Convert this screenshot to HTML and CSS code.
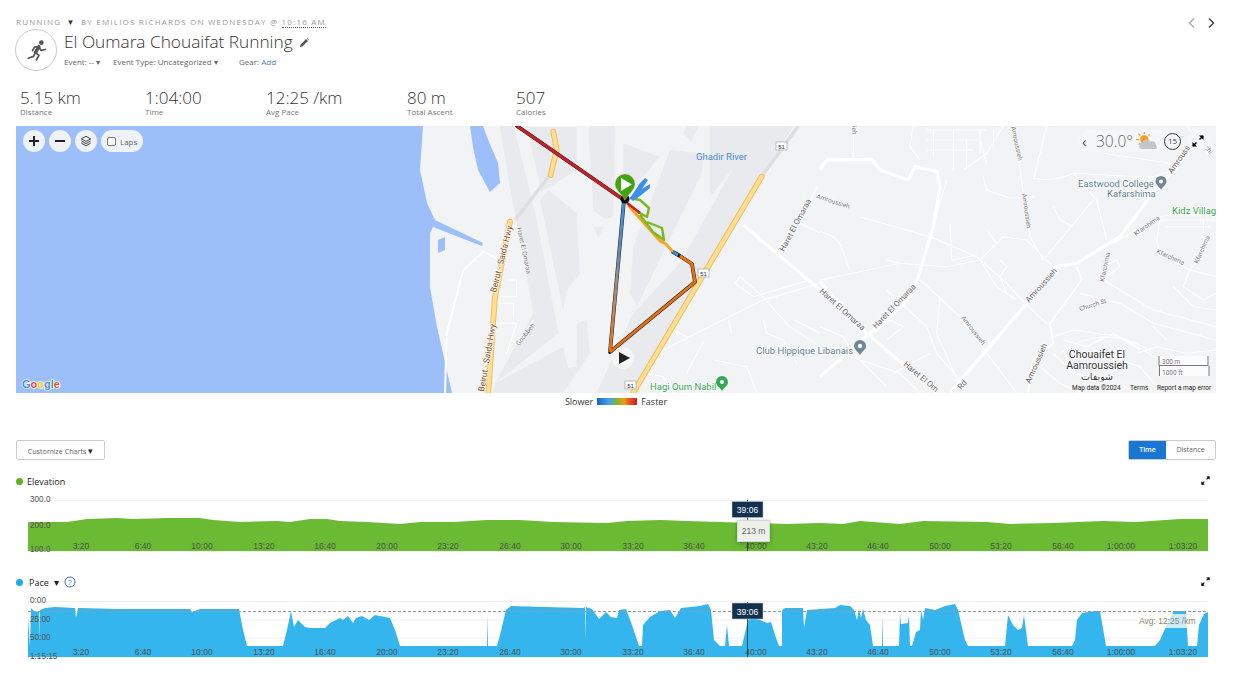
FILE: index.html
```html
<!DOCTYPE html>
<html lang="en">
<head>
<meta charset="utf-8">
<title>El Oumara Chouaifat Running</title>
<link rel="stylesheet" href="styles.css">
</head>
<body>
<div class="page">
  <nav class="pager">
    <svg class="pager-icon" viewBox="0 0 10 12"><path class="chev-off" d="M7 1.500 2.500 6 7 10.500"/></svg>
    <svg class="pager-icon" viewBox="0 0 10 12"><path class="chev-on" d="M3 1.500 7.500 6 3 10.500"/></svg>
  </nav>
  <div class="kicker">RUNNING <span class="kicker-caret">▼</span> BY EMILIOS RICHARDS ON WEDNESDAY @ <span class="kicker-time">10:16 AM</span></div>
  <header class="head">
    <div class="avatar">
      <svg viewBox="0 0 40 40" class="runner">
        <circle cx="26" cy="13" r="2.400"/>
        <path class="runner-body" d="M23.500 17 20 23"/>
        <path class="runner-limb" d="M20 23 23.500 26 21 30.500M20 23 18 27 12.500 29M23.500 17 19 17.500 17 21M23.500 17 25.500 21 30 20"/>
      </svg>
    </div>
    <div class="head-text">
      <h1 class="title">El Oumara Chouaifat Running
        <svg class="pencil" viewBox="0 0 12 12"><path d="M1 11l.8-3L8.500 1.300l2.200 2.200L4 10.200zM9.200.7l.7-.5 1.900 1.900-.5.700z"/></svg>
      </h1>
      <div class="meta">
        <span class="meta-a">Event: -- ▾</span>
        <span class="meta-b">Event Type: Uncategorized ▾</span>
        <span class="meta-c">Gear: <span class="link">Add</span></span>
      </div>
    </div>
  </header>
  <section class="stats">
    <div class="stat s1"><div class="val">5.15 km</div><div class="lab">Distance</div></div>
    <div class="stat s2"><div class="val">1:04:00</div><div class="lab">Time</div></div>
    <div class="stat s3"><div class="val">12:25 /km</div><div class="lab">Avg Pace</div></div>
    <div class="stat s4"><div class="val">80 m</div><div class="lab">Total Ascent</div></div>
    <div class="stat s5"><div class="val">507</div><div class="lab">Calories</div></div>
  </section>

  <section class="map">
    <svg class="map-canvas" viewBox="16 126 1200 267" preserveAspectRatio="none">
      <defs>
        <linearGradient id="desc" gradientUnits="userSpaceOnUse" x1="624" y1="200" x2="610" y2="352">
          <stop offset="0" stop-color="#3d8fe0"/><stop offset=".3" stop-color="#5f87b8"/><stop offset=".55" stop-color="#9b8f88"/><stop offset="1" stop-color="#e8731a"/>
        </linearGradient>
      </defs>
      <rect class="land" x="16" y="126" width="1200" height="267"/>
      <path class="water" d="M16 126H423L420 170 427 203 435 220 483 243 482 246 433 227 430 233 430 287 437 327 452 393H16Z"/>
      <path class="water" d="M470 126 473 147 478 170 490 192 500 183 498 163 487 137 483 126Z"/>
      <path class="water" d="M438 240 445 237 445 250 438 253Z"/>
      <g transform="translate(420 120) scale(.33333)">
        <path class="block" d="M240 18H282L350 300 415 640 225 790 340 580 270 200Z"/>
        <path class="block" d="M320 20H470V150L365 215Z"/>
        <path class="block" d="M505 30Q505 18 520 18H585L580 285Q570 300 550 295L520 270Z"/>
        <path class="block" d="M360 240 385 210 470 280 480 460 440 510 430 570Z"/>
        <path class="block" d="M610 70 720 110 610 240Z"/>
        <path class="block" d="M750 90 850 100 845 160 650 560 630 520 640 380Z"/>
        <path class="block" d="M870 18H1040L870 230Z"/>
        <path class="block" d="M1010 18 780 430 640 580 530 818H640L1120 18Z"/>
        <path class="block" d="M470 610 500 600 510 700 430 818H220L225 790 430 680 445 745 470 740Z"/>
        <path class="block" d="M520 320H550L535 355Z"/>
        <path class="block" d="M800 18H835L815 65 790 40Z"/>
        <path class="road-gray" d="M285 300 390 165M1135 18 1025 170"/>
        <path class="road-mid" d="M75 818 80 640 130 450 190 395 240 420"/>
        <path class="road-thin" d="M265 480H290V530H240M240 550H280V590M240 610H290L260 700M340 600 290 675"/>
        <path class="road-thin" d="M730 690 1030 540 1200 490M1040 540 960 470 945 490 1000 530 1170 480M1040 545 1110 620 1200 680M800 650 760 630M850 665 800 760M925 600 935 640M1030 600 1040 640 1090 660 1130 730M670 760 730 770 760 818M880 720 980 740 1010 818M1125 600 1200 640M1190 200 1140 310 1200 340"/>
        <path class="road-main" d="M970 315 1200 510"/>
        <path class="hw-o" d="M1025 170 640 818M270 305 225 530 205 818M400 35 410 90 392 165"/>
        <path class="hw-i" d="M1025 170 640 818M270 305 225 530 205 818M400 35 410 90 392 165"/>
      </g>
      <g transform="translate(820 120) scale(.33333)">
        <path class="road-thin" d="M100 18V115M280 18 270 80 300 120M500 30H320M320 60H470M320 90H460M340 30V110M400 30V150M440 60V140M480 30V100M520 30V70M550 18 500 100 430 150M580 18 600 150 630 350 670 420M680 18 640 180M640 175C700 185 740 170 760 160 800 160 900 170 1000 170L1060 150M760 160 830 240 860 360M490 170 500 210 570 235 640 230M670 420 820 240M0 335C80 350 70 420 90 450M0 480 240 430 380 440 480 420 550 350 620 360 700 440M120 290 330 350 470 410 560 490 610 545 680 610M330 350 380 180M390 310 395 420 470 405M300 480 420 590 500 700 590 818M360 530 350 640 420 800M480 420 530 500 590 540M540 420 560 440 540 470 560 520M200 420 240 430M780 520 900 550 1000 610 1188 660M850 480 1000 570 1188 620M700 650 760 630 900 650 1020 720M720 700C800 640 900 630 1000 700M1188 300H1020L1010 360 1020 400 1110 450 1188 470M880 370 1000 300 1040 285H1188M1110 450 1090 500 1150 540 1188 520M1150 300V400L1110 450M1040 320H1170M700 260 720 300 760 320M500 330 530 370 500 400M850 440 890 420 900 440 860 470M1100 18 1180 120M850 100 1050 130 1040 180M880 50H1000M200 510 320 620 350 700 420 780M0 620 70 650 100 700 200 800M160 640 210 600 250 620 200 660M60 700 240 760 300 818M700 700 760 760 880 790M820 690 960 740 1010 800M220 760 330 700M480 60 500 130M730 660 800 680 880 640 960 690M660 740 720 790 780 818M950 700 1010 680 1100 700 1188 690M1060 500 1120 560 1188 570M1000 620 1040 660"/>
        <path class="road-main" d="M0 150 20 120 155 118 180 150 265 180 285 140 350 155 360 200 340 320 295 470 265 540 150 640 0 770"/>
        <path class="road-main" d="M0 485 140 640 350 818"/>
        <path class="road-main" d="M390 818 620 550 710 440 770 430 900 350 990 230 1110 90"/>
        <path class="road-mid" d="M770 440 785 480 690 610 700 670 640 720 625 818"/>
      </g>
      <g class="shields">
        <rect x="776" y="142" width="11" height="8"/><text x="781.500" y="148.500">51</text>
        <rect x="698" y="269" width="11" height="8"/><text x="703.500" y="275.500">51</text>
        <rect x="625" y="381" width="11" height="8"/><text x="630.500" y="387.500">51</text>
      </g>
      <text class="t-water" x="696" y="160">Ghadir River</text>
      <g class="t-hw">
        <text transform="translate(496 293) rotate(-76)">Beirut - Saida Hwy</text>
        <text transform="translate(484 392) rotate(-80)">Beirut - Saida Hwy</text>
      </g>
      <g class="t-road">
        <text transform="translate(784 252) rotate(-62)">Haret El Omaraa</text>
        <text transform="translate(819 292) rotate(42)">Haret El Omaraa</text>
        <text transform="translate(876 329) rotate(-46)">Haret El Omaraa</text>
        <text transform="translate(903 365) rotate(40)">Haret El Om</text>
        <text transform="translate(961 390) rotate(-48)">Rd</text>
        <text transform="translate(1029 303) rotate(-48)">Amroussieh</text>
        <text transform="translate(1030 384) rotate(-66)">Amroussieh</text>
        <text transform="translate(1172 174) rotate(-55)">Amrouss</text>
      </g>
      <g class="t-small">
        <text transform="translate(517 228) rotate(78)">Haret El Omaraa</text>
        <text transform="translate(519 346) rotate(-52)">Goobbeh</text>
        <text transform="translate(961 318) rotate(52)">Amroussieh</text>
        <text transform="translate(816 198) rotate(18)">Amroussieh</text>
        <text transform="translate(1022 194) rotate(82)">Amroussieh</text>
        <text transform="translate(1011 127) rotate(78)">Amroussieh</text>
        <text transform="translate(852 126) rotate(88)">ieh</text>
        <text transform="translate(1203 146) rotate(52)">rchi</text>
        <text transform="translate(1136 236) rotate(-35)">Kfarchima</text>
        <text transform="translate(1156 253) rotate(24)">Kfarchima</text>
        <text transform="translate(1198 264) rotate(-66)">Kfarchima</text>
        <text transform="translate(1104 282) rotate(-78)">Kfarchima</text>
        <text transform="translate(1080 311) rotate(-17)">Church St</text>
      </g>
      <g class="t-poi">
        <text x="1078" y="187">Eastwood College</text>
        <text x="1107" y="197">Kafarshima</text>
        <text x="756" y="354">Club Hippique Libanais</text>
      </g>
      <g class="t-green">
        <text x="1172" y="214">Kidz Villag</text>
        <text x="650" y="390">Hagi Oum Nabil</text>
      </g>
      <g class="t-town">
        <text x="1097" y="358">Chouaifet El</text>
        <text x="1097" y="369">Aamroussieh</text>
        <text class="t-ar" x="1097" y="380">شويفات</text>
      </g>
      <path class="pin-poi" d="M1161 176a5.500 5.500 0 0 1 5.500 5.500c0 3-3.500 5-5.500 8-2-3-5.500-5-5.500-8a5.500 5.500 0 0 1 5.500-5.500Z"/>
      <circle class="pin-hole" cx="1161" cy="181.500" r="2"/>
      <path class="pin-poi" d="M860 340a6 6 0 0 1 6 6c0 3.500-4 5.500-6 9-2-3.500-6-5.500-6-9a6 6 0 0 1 6-6Z"/>
      <circle class="pin-hole" cx="860" cy="346" r="2.200"/>
      <path class="pin-green" d="M722 376a6 6 0 0 1 6 6c0 3.500-4 5.500-6 9-2-3.500-6-5.500-6-9a6 6 0 0 1 6-6Z"/>
      <circle class="pin-hole" cx="722" cy="382" r="2"/>

      <path class="trk-o" d="M517 126 624 200"/>
      <path class="trk-red" d="M517 126 624 200"/>
      <path class="trk-o" d="M624 200 610 352 695 282 692 264 680 256 673 252"/>
      <path class="trk-grad" d="M624 200 610 352"/>
      <path class="trk-orange" d="M610 352 695 282 692 264 680 256"/>
      <path class="trk-amber" d="M628 205 660 241 666 244 673 252"/>
      <path class="trk-blue" d="M673 252 678 255"/>
      <path class="trk-green" d="M630 198 640 200 649 208 647 217 638 212M647 222 662 228 664 240 653 232 640 215"/>
      <path class="trk-red" d="M627 203 640 213"/>
      <path class="wing" d="M630 198 640 183 645 178 648 180 642 189 650 184 650 188 640 196 633 201Z"/>
      <circle class="end-dot" cx="625" cy="199" r="4.500"/>
      <path class="pin-start" d="M625 174a10 10 0 0 1 10 10c0 6-6 9-10 16-4-7-10-10-10-16a10 10 0 0 1 10-10Z"/>
      <path class="pin-play" d="M621 178 632 184.500 621 191Z"/>
      <circle class="play-bg" cx="623" cy="358" r="11"/>
      <path class="play-tri" d="M619 352 630 358 619 364Z"/>
      <g class="g-logo">
        <text x="22" y="388"><tspan class="g1">G</tspan><tspan class="g2">o</tspan><tspan class="g3">o</tspan><tspan class="g1">g</tspan><tspan class="g4">l</tspan><tspan class="g2">e</tspan></text>
      </g>
      <rect class="attr-bg" x="1070" y="381" width="146" height="12"/>
      <g class="t-attr">
        <text x="1072" y="390">Map data ©2024</text>
        <text x="1130" y="390">Terms</text>
        <text x="1157" y="390">Report a map error</text>
      </g>
      <g class="scale">
        <rect class="scale-bg" x="1159" y="356" width="50" height="20"/>
        <path class="scale-line" d="M1159 356V365.500H1208V356M1159.500 376V365.500M1209 376V365.500"/>
        <text x="1162" y="364">300 m</text>
        <text x="1162" y="375">1000 ft</text>
      </g>
    </svg>
    <div class="map-tools">
      <button class="tool"><svg viewBox="0 0 12 12"><path class="ico-bold" d="M6 1V11M1 6H11"/></svg></button>
      <button class="tool"><svg viewBox="0 0 12 12"><path class="ico-bold" d="M1 6H11"/></svg></button>
      <button class="tool"><svg viewBox="0 0 14 14"><path class="ico-thin" d="M7 1.500 12.500 4.500 7 7.500 1.500 4.500ZM1.500 7 7 10 12.500 7M1.500 9.500 7 12.500 12.500 9.500"/></svg></button>
      <label class="laps"><span class="check"></span>Laps</label>
    </div>
    <div class="weather">
      <span class="w-back">‹</span>
      <span class="w-temp">30.0°</span>
      <svg class="w-icon" viewBox="0 0 24 20">
        <circle class="sun" cx="9" cy="8" r="4.500"/>
        <path class="sun-rays" d="M9 0V2.500M2.500 2 4.500 4M0 8.500H3M2.500 14 4.500 12M15 2.500 13.500 4"/>
        <path class="cloud" d="M7 19a3.500 3.500 0 0 1 0-7 5 5 0 0 1 9-1.500 4.500 4.500 0 0 1 6 4.500 2.500 2.500 0 0 1 0 4Z"/>
      </svg>
      <span class="w-clock">15</span>
    </div>
    <button class="map-expand"><svg viewBox="0 0 12 12"><path class="exp" d="M1 11 4.500 7.500M11 1 7.500 4.500"/><path d="M.5 7V11.500H5ZM11.500 5V.5H7Z"/></svg></button>
  </section>

  <div class="legend">Slower <span class="legend-bar"></span> Faster</div>

  <div class="chart-bar">
    <button class="custom">Customize Charts <span class="custom-caret">▾</span></button>
    <div class="toggle"><span class="toggle-on">Time</span><span class="toggle-off">Distance</span></div>
  </div>

  <section class="chart chart-elev">
    <div class="chart-head">
      <span class="dot dot-green"></span><span class="chart-name">Elevation</span>
      <svg class="chart-exp" viewBox="0 0 12 12"><path class="exp" d="M1 11 4.500 7.500M11 1 7.500 4.500"/><path d="M.5 7V11.500H5ZM11.500 5V.5H7Z"/></svg>
    </div>
    <svg class="plot plot-elev" viewBox="16 495 1200 60">
      <path class="grid" d="M28 500.500H1208M28 551.500H1208"/>
      <path class="area-green" d="M28 522 67 522 87 519 117 518 133 519 167 518 200 518 213 520 240 522 277 521 290 522 310 519 327 519 340 521 367 522 400 524 420 522 453 522 487 520 520 520 553 522 607 523 627 521 660 520 687 521 720 522 753 523 787 524 820 523 843 524 860 521 900 524 923 521 987 522 1010 524 1053 523 1103 521 1137 522 1180 519 1208 519V551H28Z"/>
      <g class="ylab"><text x="30" y="502">300.0</text><text x="30" y="528">200.0</text><text x="30" y="552">100.0</text></g>
      <g class="xlab" transform="translate(0 549)">
        <text x="81" y="0">3:20</text><text x="143" y="0">6:40</text><text x="202" y="0">10:00</text><text x="264" y="0">13:20</text><text x="325" y="0">16:40</text><text x="387" y="0">20:00</text><text x="448" y="0">23:20</text><text x="510" y="0">26:40</text><text x="571" y="0">30:00</text><text x="633" y="0">33:20</text><text x="694" y="0">36:40</text><text x="756" y="0">40:00</text><text x="817" y="0">43:20</text><text x="878" y="0">46:40</text><text x="940" y="0">50:00</text><text x="1001" y="0">53:20</text><text x="1063" y="0">56:40</text><text x="1121" y="0">1:00:00</text><text x="1183" y="0">1:03:20</text>
      </g>
      <path class="cursor" d="M747.500 500V551"/>
      <rect class="badge" x="732" y="501.500" width="31" height="16"/>
      <text class="badge-t" x="747.500" y="513">39:06</text>
      <rect class="tip" x="737.500" y="520.500" width="32" height="21"/>
      <text class="tip-t" x="753.500" y="534">213 m</text>
    </svg>
  </section>

  <section class="chart chart-pace">
    <div class="chart-head">
      <span class="dot dot-blue"></span><span class="chart-name pace-name">Pace <span class="pace-caret">▾</span></span>
      <svg class="help" viewBox="0 0 12 12"><circle cx="6" cy="6" r="5"/><text x="6" y="8.700">?</text></svg>
      <svg class="chart-exp" viewBox="0 0 12 12"><path class="exp" d="M1 11 4.500 7.500M11 1 7.500 4.500"/><path d="M.5 7V11.500H5ZM11.500 5V.5H7Z"/></svg>
    </div>
    <svg class="plot plot-pace" viewBox="16 596 1200 64">
      <path class="grid" d="M28 601.500H1208M28 620H1208M28 638H1208M28 657.500H1208"/>
      <path class="area-blue" d="M28 657 28 618 30 646 31 608 34 611 39 612 39 640 40 610 45 608 55 607 75 608 76 618 78 608 120 609 190 609 192 612 200 609 239 609 243 630 247 646 283 646 287 630 291 611 294 627 298 620 305 627 310 628 325 628 330 623 340 618 343 620 348 616 353 623 356 618 362 616 369 620 375 615 390 618 395 630 400 646 487 646 487.500 615 488 646 497 646 500 635 506 610 511 606 545 607 583 608 585 607 585.500 640 586 607 592 609 599 619 606 612 611 617 617 618 619 610 626 609 632 625 639 646 642 646 643 625 650 617 660 611 670 610 675 618 681 608 700 606 708 604 711 610 714 640 720 646 725 646 727 625 729 646 742 646 748 620 752 618 760 620 767 623 771 622 775 635 779 646 782 646 782 610 785 608 803 608 804 628 807 610 835 608 840 605 850 606 854 610 857 620 859 609 861 618 863 609 866 620 870 625 873 646 882 646 882.500 614 883 646 899 646 900 614 901 624 908 623 909 615 910 646 912 646 916 632 920 630 921 610 923 620 925 608 935 610 945 606 955 604 958 610 965 640 968 646 1005 646 1008 615 1013 625 1018 630 1022 628 1024 615 1028 646 1072 646 1075 640 1077 620 1082 613 1095 611 1100 611 1106 646 1155 646 1160 640 1168 622 1174 611 1186 611 1188 646 1197 646 1199 625 1204 614 1208 612V657Z"/>
      <path class="avg" d="M28 611.500H1208"/>
      <rect class="avg-bg" x="1137" y="614" width="60" height="14"/>
      <text class="avg-t" x="1139" y="624">Avg: 12:25 /km</text>
      <g class="ylab"><text x="30" y="603">0:00</text><text x="30" y="622">25:00</text><text x="30" y="640">50:00</text><text x="30" y="659">1:15:15</text></g>
      <g class="xlab" transform="translate(0 655)">
        <text x="81" y="0">3:20</text><text x="143" y="0">6:40</text><text x="202" y="0">10:00</text><text x="264" y="0">13:20</text><text x="325" y="0">16:40</text><text x="387" y="0">20:00</text><text x="448" y="0">23:20</text><text x="510" y="0">26:40</text><text x="571" y="0">30:00</text><text x="633" y="0">33:20</text><text x="694" y="0">36:40</text><text x="756" y="0">40:00</text><text x="817" y="0">43:20</text><text x="878" y="0">46:40</text><text x="940" y="0">50:00</text><text x="1001" y="0">53:20</text><text x="1063" y="0">56:40</text><text x="1121" y="0">1:00:00</text><text x="1183" y="0">1:03:20</text>
      </g>
      <path class="cursor" d="M747.500 602V657"/>
      <rect class="badge" x="732" y="603" width="31" height="16"/>
      <text class="badge-t" x="747.500" y="614.500">39:06</text>
    </svg>
  </section>
</div>
</body>
</html>
```
FILE: styles.css
```css
* { box-sizing: border-box; }
html, body { margin: 0; padding: 0; background: #fff; }
body { font-family: "Open Sans", sans-serif; color: #333; overflow: hidden; }
.page { position: relative; width: 1236px; height: 675px; padding: 15px 20px 0 16px; }

.pager { position: absolute; top: 17px; right: 20px; display: flex; gap: 9px; }
.pager-icon { width: 10px; height: 12px; }
.pager-icon path { fill: none; stroke-width: 1.500; }
.chev-off { stroke: #aab; }
.chev-on { stroke: #445; }

.kicker { font-size: 8px; line-height: 14px; letter-spacing: 1.200px; color: #9a9aa3; white-space: nowrap; }
.kicker-caret { color: #333; font-size: 8px; padding: 0 2px; }
.kicker-time { border-bottom: 1px dotted #555; }

.head { display: flex; gap: 7px; margin-left: -1px; height: 44px; }
.avatar { width: 42px; height: 42px; border: 1.500px solid #ccc; border-radius: 50%; flex: none; }
.runner { width: 39px; height: 39px; display: block; }
.runner circle { fill: #555; }
.runner-body { fill: none; stroke: #555; stroke-width: 3.400; stroke-linecap: round; }
.runner-limb { fill: none; stroke: #555; stroke-width: 1.800; stroke-linecap: round; stroke-linejoin: round; }
.title { margin: 0; font-size: 17.250px; font-weight: 300; line-height: 26px; color: #333; white-space: nowrap; }
.pencil { width: 10px; height: 10px; margin-left: 2px; fill: #555; }
.meta { display: flex; font-size: 8px; line-height: 12px; color: #666; margin-top: 1px; white-space: nowrap; }
.meta-a { width: 49px; }
.meta-b { width: 126px; }
.link { color: #4a7fc0; }

.stats { display: flex; margin-top: 15px; padding-left: 4px; height: 38px; }
.stat { flex: none; }
.s1 { width: 125px; }
.s2 { width: 121px; }
.s3 { width: 141px; }
.s4 { width: 109px; }
.val { font-size: 17px; font-weight: 300; line-height: 19px; color: #333; white-space: nowrap; }
.lab { font-size: 8px; line-height: 9px; color: #777; white-space: nowrap; }

.map { position: relative; width: 1200px; height: 267px; }
.map-canvas { display: block; width: 1200px; height: 267px; font-family: Roboto, sans-serif; }
.land { fill: #f2f3f5; }
.water { fill: #9cbff9; }
.block { fill: #e8eaed; }
.road-gray { fill: none; stroke: #dcdee0; stroke-width: 10; }
.road-thin { fill: none; stroke: #fff; stroke-width: 3.200; stroke-linejoin: round; }
.road-mid { fill: none; stroke: #fff; stroke-width: 6; stroke-linejoin: round; }
.road-main { fill: none; stroke: #fff; stroke-width: 10; stroke-linejoin: round; }
.hw-o { fill: none; stroke: #f3b64a; stroke-width: 17; stroke-linecap: round; }
.hw-i { fill: none; stroke: #fdde94; stroke-width: 12; stroke-linecap: round; }
.shields rect { fill: #fff; stroke: #999; stroke-width: .6; }
.shields text { font-size: 6px; text-anchor: middle; fill: #333; font-family: "Liberation Sans", sans-serif; }
.t-water { font-size: 9.500px; fill: #4c8bd8; }
.t-hw { font-size: 8.500px; fill: #7a4a1c; stroke: #fff; stroke-width: 1.500px; paint-order: stroke; }
.t-road { font-size: 8px; fill: #666; stroke: #fff; stroke-width: 1.500px; paint-order: stroke; }
.t-small { font-size: 6.500px; fill: #777; stroke: #fff; stroke-width: 1px; paint-order: stroke; }
.t-poi { font-size: 9.500px; fill: #5f7f91; stroke: #fff; stroke-width: 1.500px; paint-order: stroke; }
.t-green { font-size: 9.500px; fill: #33a852; stroke: #fff; stroke-width: 1.500px; paint-order: stroke; }
.t-town { font-size: 10.500px; fill: #333; text-anchor: middle; stroke: #fff; stroke-width: 1.500px; paint-order: stroke; }
.t-ar { font-family: "DejaVu Sans", sans-serif; font-size: 9.500px; }
.pin-poi { fill: #6d8794; }
.pin-green { fill: #34a853; }
.pin-hole { fill: #fff; }
.trk-o { fill: none; stroke: #222; stroke-width: 3.800; stroke-linejoin: round; stroke-linecap: round; }
.trk-red { fill: none; stroke: #c62026; stroke-width: 2.800; }
.trk-grad { fill: none; stroke: url(#desc); stroke-width: 2.800; }
.trk-orange { fill: none; stroke: #e8700f; stroke-width: 2.800; stroke-linejoin: round; }
.trk-amber { fill: none; stroke: #f2a51f; stroke-width: 2.800; stroke-linejoin: round; }
.trk-blue { fill: none; stroke: #3d8fe0; stroke-width: 2.800; }
.trk-green { fill: none; stroke: #7ab81f; stroke-width: 2.400; stroke-linejoin: round; }
.wing { fill: #3d8fe8; }
.end-dot { fill: #111; }
.pin-start { fill: #3fa312; stroke: #f4b9a8; stroke-width: .5; }
.pin-play { fill: #fff; }
.play-bg { fill: #f5f5f5; }
.play-tri { fill: #222; }
.g-logo { font-size: 11px; font-weight: 700; font-family: "Liberation Sans", sans-serif; stroke: #fff; stroke-width: 1.500px; paint-order: stroke; }
.g1 { fill: #4285f4; }
.g2 { fill: #ea4335; }
.g3 { fill: #fbbc05; }
.g4 { fill: #34a853; }
.attr-bg { fill: #f5f5f5; opacity: .6; }
.t-attr { font-size: 6.500px; fill: #222; }
.scale-bg { fill: #fff; opacity: .75; }
.scale-line { fill: none; stroke: #777; stroke-width: 1; }
.scale text { font-size: 6.500px; fill: #777; }

.map-tools { position: absolute; top: 4px; left: 7px; display: flex; gap: 4px; align-items: center; }
.tool { width: 22px; height: 22px; border: 0; padding: 5px; border-radius: 50%; background: #eff2f7; display: block; }
.tool svg { display: block; width: 12px; height: 12px; }
.ico-bold { fill: none; stroke: #222; stroke-width: 2; }
.ico-thin { fill: none; stroke: #222; stroke-width: 1; stroke-linejoin: round; }
.laps { width: 42px; height: 22px; border-radius: 11px; background: #eff2f7; display: flex; align-items: center; gap: 4px; padding-left: 6px; font-size: 8px; color: #666; }
.check { width: 9px; height: 9px; border: 1px solid #777; border-radius: 2px; background: #fff; flex: none; }

.weather { position: absolute; top: 4px; left: 1063px; width: 104px; height: 22px; border-radius: 11px; background: rgba(245,246,248,.85); display: flex; align-items: center; padding-left: 3px; }
.w-back { font-size: 15px; line-height: 18px; color: #555; width: 14px; text-align: left; }
.w-temp { font-size: 15.500px; font-weight: 300; color: #666; width: 40px; }
.w-icon { width: 22px; height: 18px; flex: none; }
.sun { fill: #f59a23; }
.sun-rays { stroke: #f59a23; stroke-width: 1.300; fill: none; }
.cloud { fill: #c3c5c8; }
.w-clock { width: 17px; height: 17px; margin-left: 6px; border: 1.300px solid #333; border-radius: 50%; font-size: 8px; line-height: 14px; text-align: center; color: #444; flex: none; }
.map-expand { position: absolute; top: 4px; left: 1171px; width: 22px; height: 22px; padding: 5px; border: 0; border-radius: 50%; background: rgba(245,246,248,.85); }
.map-expand svg { display: block; width: 12px; height: 12px; }
.exp { fill: none; stroke: #111; stroke-width: 1.500; }

.legend { height: 17px; display: flex; align-items: center; justify-content: center; gap: 4px; font-size: 9px; color: #333; }
.legend-bar { width: 40px; height: 7px; background: linear-gradient(90deg, #1a66c0 0%, #4aa0f0 30%, #7cb82f 50%, #f59a16 68%, #e2541a 82%, #c62026 100%); }

.chart-bar { display: flex; justify-content: space-between; width: 1200px; margin-top: 30px; height: 21px; }
.custom { width: 89px; height: 20px; padding: 0; border: 1px solid #ccc; border-radius: 2px; background: #fff; font: 7.200px "Open Sans", sans-serif; color: #666; }
.custom-caret { color: #222; font-size: 9px; }
.toggle { width: 88px; height: 20px; border: 1px solid #ccc; border-radius: 2px; display: flex; font-size: 7px; line-height: 18px; text-align: center; }
.toggle-on { width: 37px; background: #1976d2; color: #fff; font-weight: 600; }
.toggle-off { flex: 1; color: #666; }

.chart { width: 1200px; }
.chart-elev { margin-top: 14px; }
.chart-pace { margin-top: 21px; }
.chart-head { position: relative; display: flex; align-items: center; height: 12px; font-size: 9px; color: #222; }
.dot { width: 7px; height: 7px; border-radius: 50%; flex: none; }
.dot-green { background: #5fb31f; }
.dot-blue { background: #1eaaf1; }
.chart-name { margin-left: 4px; }
.pace-name { margin-left: 6px; }
.pace-caret { font-size: 10px; margin-left: 3px; }
.help { width: 12px; height: 12px; margin-left: 5px; }
.help circle { fill: none; stroke: #3f6fd0; stroke-width: 1; }
.help text { font-size: 8px; text-anchor: middle; fill: #3f6fd0; }
.chart-exp { position: absolute; right: 6px; top: 1px; width: 9px; height: 9px; }
.plot { display: block; width: 1200px; font-family: "Liberation Sans", sans-serif; }
.plot-elev { height: 60px; margin-top: 8px; }
.plot-pace { height: 64px; margin-top: 8px; }
.grid { fill: none; stroke: #eee; stroke-width: 1; }
.area-green { fill: #6abb33; }
.area-blue { fill: #34b5ee; }
.ylab { font-size: 8.200px; fill: #555; }
.xlab { font-size: 8.500px; fill: #4a4f4a; text-anchor: middle; }
.cursor { stroke: #2a3a3a; stroke-width: 1; fill: none; opacity: .8; }
.badge { fill: #12304f; stroke: #ccc; stroke-width: .5; }
.badge-t { font-size: 8.500px; fill: #fff; text-anchor: middle; }
.tip { fill: #eef0ea; stroke: #d8d8d8; stroke-width: 1; filter: drop-shadow(0 1px 2px rgba(0,0,0,.3)); }
.tip-t { font-size: 8.500px; fill: #666; text-anchor: middle; }
.avg { stroke: #999; stroke-width: 1; stroke-dasharray: 3 2; fill: none; }
.avg-bg { fill: #fffff4; opacity: .75; }
.avg-t { font-size: 8.500px; fill: #888; }
```
